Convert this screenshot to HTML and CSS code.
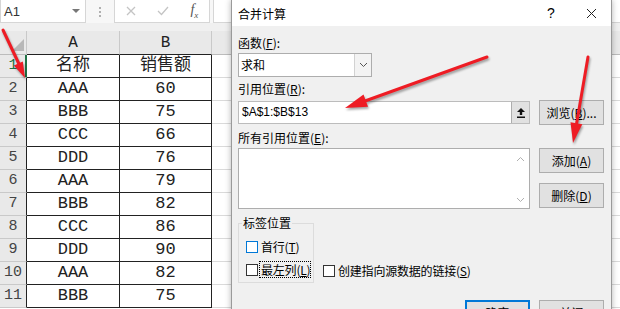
FILE: index.html
```html
<!DOCTYPE html>
<html lang="zh">

<head>
    <meta charset="UTF-8">
    <title>合并计算</title>
    <link rel="stylesheet" href="styles.css">
</head>

<body>

<!-- Barra de fórmulas -->
<div class="formula-bar">
    <div class="name-box"><span>A1</span><span class="name-arrow"></span></div>
    <div class="bar-dots"><i></i><i></i><i></i></div>
    <div class="fx-box">
        <svg width="10" height="10" viewBox="0 0 10 10"><path d="M1 1L9 9M9 1L1 9" stroke="#c4c4c4" stroke-width="1.3"/></svg>
        <svg width="12" height="10" viewBox="0 0 12 10"><path d="M1 5L4.5 8.5L11 1" stroke="#c4c4c4" stroke-width="1.3" fill="none"/></svg>
        <i class="fx">f<sub>x</sub></i>
    </div>
    <div class="formula-input"></div>
</div>
<div class="band"></div>

<!-- Hoja -->
<table class="sheet">
    <colgroup>
        <col class="c-row"><col class="c-a"><col class="c-b"><col class="c-c"><col class="c-c"><col class="c-c">
    </colgroup>
    <thead>
    <tr><th class="corner"></th><th class="dk">A</th><th class="dk">B</th><th>C</th><th>D</th><th>E</th></tr>
    </thead>
    <tbody>
    <tr><th class="rn active">1</th><td class="d">名称</td><td class="d">销售额</td><td></td><td></td><td></td></tr>
    <tr><th class="rn">2</th><td class="d">AAA</td><td class="d">60</td><td></td><td></td><td></td></tr>
    <tr><th class="rn">3</th><td class="d">BBB</td><td class="d">75</td><td></td><td></td><td></td></tr>
    <tr><th class="rn">4</th><td class="d">CCC</td><td class="d">66</td><td></td><td></td><td></td></tr>
    <tr><th class="rn">5</th><td class="d">DDD</td><td class="d">76</td><td></td><td></td><td></td></tr>
    <tr><th class="rn">6</th><td class="d">AAA</td><td class="d">79</td><td></td><td></td><td></td></tr>
    <tr><th class="rn">7</th><td class="d">BBB</td><td class="d">82</td><td></td><td></td><td></td></tr>
    <tr><th class="rn">8</th><td class="d">CCC</td><td class="d">86</td><td></td><td></td><td></td></tr>
    <tr><th class="rn">9</th><td class="d">DDD</td><td class="d">90</td><td></td><td></td><td></td></tr>
    <tr><th class="rn">10</th><td class="d">AAA</td><td class="d">82</td><td></td><td></td><td></td></tr>
    <tr><th class="rn">11</th><td class="d">BBB</td><td class="d">75</td><td></td><td></td><td></td></tr>
    </tbody>
</table>

<!-- Ventana de diálogo -->
<div class="dialog">
    <div class="dlg-title">
        <span class="dlg-name">合并计算</span>
        <span class="dlg-ctrl">?</span>
        <span class="dlg-ctrl">
            <svg width="11" height="11" viewBox="0 0 11 11"><path d="M1 1L10 10M10 1L1 10" stroke="#222" stroke-width="1"/></svg>
        </span>
    </div>
    <div class="dlg-body">
        <div class="lbl">函数(<u>F</u>):</div>
        <div class="select">
            <span class="sel-text">求和</span>
            <span class="sel-btn">
                <svg width="9" height="6" viewBox="0 0 9 6"><path d="M1 1L4.5 4.5L8 1" stroke="#555" fill="none"/></svg>
            </span>
        </div>

        <div class="lbl lbl-ref">引用位置(<u>R</u>):</div>
        <div class="row">
            <div class="ref-input">
                <span class="ref-text">$A$1:$B$13</span>
                <span class="collapse-btn">
                    <svg width="8" height="10" viewBox="0 0 8 10"><path d="M4 0L8 4H5.2V7H2.8V4H0Z" fill="#111"/><rect x="0" y="8.5" width="8" height="1.5" fill="#111"/></svg>
                </span>
            </div>
            <button class="btn">浏览(<u>B</u>)...</button>
        </div>

        <div class="lbl lbl-all">所有引用位置(<u>E</u>):</div>
        <div class="row row-top">
            <div class="listbox">
                <div class="scroll">
                    <svg width="9" height="6" viewBox="0 0 9 6"><path d="M1 5L4.5 1.5L8 5" stroke="#b0b0b0" fill="none"/></svg>
                    <svg width="9" height="6" viewBox="0 0 9 6"><path d="M1 1L4.5 4.5L8 1" stroke="#b0b0b0" fill="none"/></svg>
                </div>
            </div>
            <div class="btn-col">
                <button class="btn">添加(<u>A</u>)</button>
                <button class="btn">删除(<u>D</u>)</button>
            </div>
        </div>

        <div class="opts">
            <fieldset class="group">
                <legend>标签位置</legend>
                <div class="chk"><span class="box box-hover"></span><span class="chk-lbl">首行(<u>T</u>)</span></div>
                <div class="chk"><span class="box"></span><span class="chk-lbl focus">最左列(<u>L</u>)</span></div>
            </fieldset>
            <div class="chk chk-link"><span class="box"></span><span class="chk-lbl">创建指向源数据的链接(<u>S</u>)</span></div>
        </div>

        <div class="footer">
            <button class="btn btn-default">确定</button>
            <button class="btn">关闭</button>
        </div>
    </div>
</div>

<!-- Flechas rojas -->
<svg class="arrows" width="620" height="309" viewBox="0 0 620 309">
    <g stroke="#ee1c24" stroke-width="3" stroke-linecap="round">
        <line x1="3" y1="30" x2="19" y2="64"/>
        <line x1="487" y1="57" x2="365" y2="101"/>
        <line x1="588" y1="57" x2="576.5" y2="124"/>
    </g>
    <g fill="#ee1c24">
        <polygon points="25,78 22.8,61.4 13.8,65.6"/>
        <polygon points="345,108 368,106.7 363.5,94.5"/>
        <polygon points="573,143 582.3,124.3 570.5,122.3"/>
    </g>
</svg>

</body>
</html>
```

FILE: styles.css
```css
body {
    margin: 0;
    width: 620px;
    height: 309px;
    overflow: hidden;
    position: relative;
    background: #ffffff;
    font-family: "Noto Sans CJK SC", "Liberation Sans", sans-serif;
}

/* barra de fórmulas */
.formula-bar {
    display: flex;
    height: 23px;
    background: #f7f7f7;
}
.name-box {
    width: 86px;
    box-sizing: border-box;
    display: flex;
    align-items: center;
    justify-content: space-between;
    padding: 0 5px 0 3px;
    background: #fff;
    border: 1px solid #d6d6d6;
    border-top: none;
    font: 13px "Liberation Sans", sans-serif;
    color: #333;
}
.name-arrow {
    width: 0;
    height: 0;
    border-left: 4px solid transparent;
    border-right: 4px solid transparent;
    border-top: 4px solid #777;
}
.bar-dots {
    width: 28px;
    display: flex;
    flex-direction: column;
    align-items: center;
    justify-content: center;
    gap: 2px;
}
.bar-dots i {
    width: 2px;
    height: 2px;
    background: #b0b0b0;
}
.fx-box {
    width: 96px;
    box-sizing: border-box;
    display: flex;
    align-items: center;
    justify-content: space-around;
    background: #fff;
    border: 1px solid #d6d6d6;
    border-top: none;
}
.fx {
    font: italic 14px "Liberation Serif", serif;
    color: #555;
}
.fx sub {
    font-size: 9px;
}
.formula-input {
    flex: 1;
    margin-left: 3px;
    background: #fff;
    border-left: 1px solid #d6d6d6;
    border-bottom: 1px solid #d6d6d6;
}
.band {
    height: 8px;
    background: #f0f0f0;
}

/* hoja */
.sheet {
    border-collapse: separate;
    border-spacing: 0;
    table-layout: fixed;
    width: 812px;
    font-family: "Liberation Mono", "Noto Sans CJK SC", monospace;
}
.c-row { width: 27px; }
.c-a { width: 93px; }
.c-b { width: 92px; }
.c-c { width: 200px; }
.sheet th, .sheet td {
    padding: 0;
    line-height: 20px;
    box-sizing: border-box;
}
.sheet thead tr {
    height: 24px;
}
.sheet tbody tr {
    height: 23px;
}
.sheet thead th {
    background: #e9e9e9;
    border-right: 1px solid #c9c9c9;
    border-bottom: 1px solid #bcbcbc;
    font-weight: normal;
    font-size: 16px;
    color: #222;
}
.sheet thead th.dk {
    border-bottom-color: #222;
}
.corner {
    position: relative;
}
.corner::after {
    content: "";
    position: absolute;
    right: 2px;
    bottom: 3px;
    border-left: 12px solid transparent;
    border-bottom: 12px solid #b8b8b8;
}
.rn {
    background: #e9e9e9;
    border-right: 1px solid #222;
    border-bottom: 1px solid #c9c9c9;
    font-weight: normal;
    font-size: 15px;
    color: #444;
    text-align: center;
    padding-right: 2px;
}
.rn.active {
    color: #217346;
    border-right-color: #217346;
    box-shadow: inset -1px 0 #217346;
}
.sheet td {
    border-right: 1px solid #dadada;
    border-bottom: 1px solid #dadada;
    background: #fff;
}
.sheet td.d {
    border-right-color: #222;
    border-bottom-color: #222;
    text-align: center;
    font-size: 17px;
    color: #222;
}

/* diálogo */
.dialog {
    position: absolute;
    left: 231px;
    top: 0;
    width: 379px;
    height: 340px;
    background: #f0f0f0;
    border-left: 1px solid #9a9a9a;
    border-right: 1px solid #9a9a9a;
    box-shadow: 0 0 6px rgba(0, 0, 0, 0.3);
    font-size: 12px;
    color: #000;
}
.dlg-title {
    height: 26px;
    display: flex;
    align-items: center;
    background: #fff;
    padding-left: 6px;
}
.dlg-name {
    flex: 1;
}
.dlg-ctrl {
    width: 40px;
    height: 26px;
    display: flex;
    align-items: center;
    justify-content: center;
    font: 14px "Liberation Sans", sans-serif;
}
.dlg-body {
    padding: 9px 0 0 6px;
}
.lbl {
    height: 16px;
    line-height: 16px;
}
.lbl-ref {
    margin-top: 4px;
}
.lbl-all {
    margin-top: 5px;
}
.select {
    width: 134px;
    height: 24px;
    box-sizing: border-box;
    margin-top: 2px;
    display: flex;
    background: #fff;
    border: 1px solid #adadad;
}
.sel-text {
    flex: 1;
    line-height: 22px;
    padding-left: 2px;
}
.sel-btn {
    width: 16px;
    display: flex;
    align-items: center;
    justify-content: center;
    background: #f3f3f3;
    border-left: 1px solid #d2d2d2;
}
.row {
    display: flex;
    align-items: center;
    gap: 9px;
    margin-top: 3px;
}
.row-top {
    align-items: flex-start;
    margin-top: 2px;
}
.ref-input {
    width: 292px;
    height: 23px;
    box-sizing: border-box;
    display: flex;
    background: #fff;
    border: 1px solid #bcbcbc;
}
.ref-text {
    flex: 1;
    line-height: 21px;
    padding-left: 3px;
    font-family: "Liberation Sans", sans-serif;
}
.collapse-btn {
    width: 17px;
    display: flex;
    align-items: center;
    justify-content: center;
    background: #e1e1e1;
    border-left: 1px solid #adadad;
}
.btn {
    width: 65px;
    height: 25px;
    padding: 0;
    box-sizing: border-box;
    background: #e1e1e1;
    border: 1px solid #adadad;
    font: 12px "Noto Sans CJK SC", "Liberation Sans", sans-serif;
    color: #000;
}
.btn-default {
    border-color: #0078d7;
    box-shadow: inset 0 0 0 1px #0078d7;
}
.listbox {
    width: 292px;
    height: 61px;
    box-sizing: border-box;
    display: flex;
    justify-content: flex-end;
    background: #fff;
    border: 1px solid #adadad;
}
.scroll {
    width: 17px;
    display: flex;
    flex-direction: column;
    justify-content: space-between;
    align-items: center;
    padding: 7px 0 5px;
}
.btn-col {
    display: flex;
    flex-direction: column;
    gap: 10px;
}
.opts {
    display: flex;
    align-items: flex-end;
    margin-top: 6px;
}
.group {
    width: 76px;
    height: 68px;
    box-sizing: border-box;
    margin: 0;
    padding: 0 0 0 3px;
    border: 1px solid #dcdcdc;
}
.group legend {
    padding: 0 1px;
    line-height: 16px;
}
.group .chk:first-of-type {
    margin-top: 4px;
}
.chk {
    height: 23px;
    display: flex;
    align-items: center;
    margin-left: 4px;
    white-space: nowrap;
}
.chk-link {
    margin: 0 0 1px 9px;
}
.box {
    flex: none;
    width: 10px;
    height: 10px;
    border: 1px solid #333;
    background: #fff;
}
.box-hover {
    border-color: #0078d7;
}
.chk-lbl {
    padding: 0 0 0 1px;
    margin-left: 1px;
    line-height: 15px;
    letter-spacing: -0.2px;
    border: 1px dotted transparent;
}
.chk-lbl.focus {
    border-color: #000;
}
.footer {
    display: flex;
    justify-content: flex-end;
    gap: 9px;
    width: 366px;
    margin-top: 17px;
}

/* flechas */
.arrows {
    position: absolute;
    left: 0;
    top: 0;
    pointer-events: none;
    filter: drop-shadow(1px 2px 1px rgba(0, 0, 0, 0.35));
}
```
